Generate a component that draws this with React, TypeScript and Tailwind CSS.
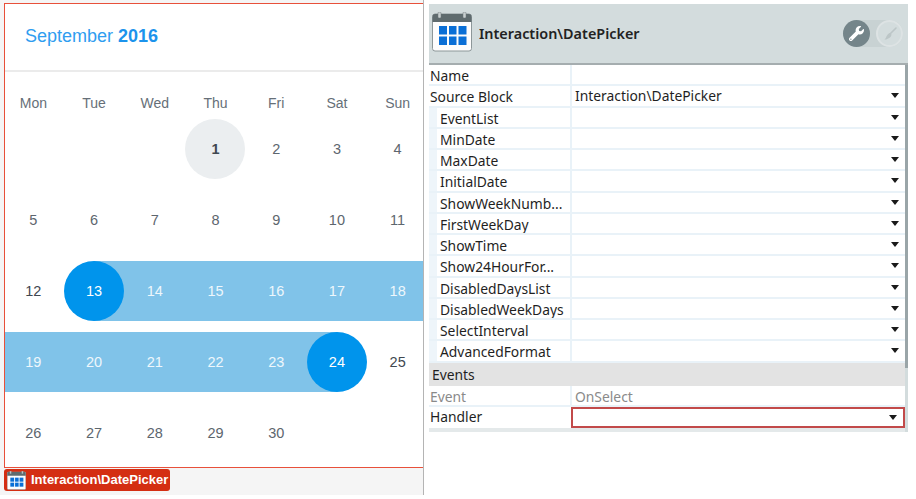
import React from "react";
import { FaWrench } from "react-icons/fa";

const head = ["Mon", "Tue", "Wed", "Thu", "Fri", "Sat", "Sun"];
type D = { n: string; k?: "today" | "start" | "end" | "range" | "plain" };
const weeks: D[][] = [
  [{ n: "" }, { n: "" }, { n: "" }, { n: "1", k: "today" }, { n: "2" }, { n: "3" }, { n: "4" }],
  ["5", "6", "7", "8", "9", "10", "11"].map((n) => ({ n })),
  [{ n: "12", k: "plain" }, { n: "13", k: "start" }, { n: "14", k: "range" }, { n: "15", k: "range" }, { n: "16", k: "range" }, { n: "17", k: "range" }, { n: "18", k: "range" }],
  [{ n: "19", k: "range" }, { n: "20", k: "range" }, { n: "21", k: "range" }, { n: "22", k: "range" }, { n: "23", k: "range" }, { n: "24", k: "end" }, { n: "25", k: "plain" }],
  [{ n: "26" }, { n: "27" }, { n: "28" }, { n: "29" }, { n: "30" }, { n: "" }, { n: "" }],
];

function Day({ d }: { d: D }) {
  if (d.k === "today")
    return (
      <div className="h-[60px] flex items-center justify-center">
        <div className="w-[60px] h-[60px] pt-[2px] rounded-full bg-[#ebeef0] flex items-center justify-center font-bold text-[#3f4850]">{d.n}</div>
      </div>
    );
  if (d.k === "start")
    return (
      <div className="h-[60px] bg-[linear-gradient(to_right,transparent_50%,#80c3e9_50%)] flex items-center justify-center">
        <div className="w-[60px] h-[60px] pt-[2px] rounded-full bg-[#0094ec] flex items-center justify-center text-white">{d.n}</div>
      </div>
    );
  if (d.k === "end")
    return (
      <div className="h-[60px] bg-[linear-gradient(to_left,transparent_50%,#80c3e9_50%)] flex items-center justify-center">
        <div className="w-[60px] h-[60px] pt-[2px] rounded-full bg-[#0094ec] flex items-center justify-center text-white">{d.n}</div>
      </div>
    );
  if (d.k === "range")
    return <div className="h-[60px] pt-[2px] bg-[#80c3e9] flex items-center justify-center text-[#eef7fc]">{d.n}</div>;
  return <div className={`h-[60px] pt-[2px] flex items-center justify-center ${d.k === "plain" ? "text-[#3f4850]" : "text-[#5d666e]"}`}>{d.n}</div>;
}

function CalIcon({ className }: { className: string }) {
  return (
    <svg viewBox="0 0 40 40" className={className}>
      <rect x="0.5" y="2" width="39" height="37" rx="2.5" fill="#fdfdfd" stroke="#8d9799" />
      <path d="M0.5 10V4.5a2.5 2.5 0 0 1 2.5-2.5h34a2.5 2.5 0 0 1 2.5 2.5V10z" fill="#5f6b6e" />
      <rect x="6" y="0" width="3" height="6" rx="1" fill="#c8cfd0" stroke="#6d777b" strokeWidth="0.5" />
      <rect x="31" y="0" width="3" height="6" rx="1" fill="#c8cfd0" stroke="#6d777b" strokeWidth="0.5" />
      <g fill="#0a6fd6">
        <rect x="7" y="14" width="8" height="8.5" />
        <rect x="17" y="14" width="7.5" height="8.5" />
        <rect x="26.5" y="14" width="8" height="8.5" />
        <rect x="7" y="24.5" width="8" height="8.5" />
        <rect x="17" y="24.5" width="7.5" height="8.5" />
        <rect x="26.5" y="24.5" width="8" height="8.5" />
      </g>
    </svg>
  );
}

const props: { label: string; value?: string; indent?: boolean }[] = [
  { label: "Name" },
  { label: "Source Block", value: "Interaction\\DatePicker" },
  { label: "EventList", indent: true, value: "" },
  { label: "MinDate", indent: true, value: "" },
  { label: "MaxDate", indent: true, value: "" },
  { label: "InitialDate", indent: true, value: "" },
  { label: "ShowWeekNumb...", indent: true, value: "" },
  { label: "FirstWeekDay", indent: true, value: "" },
  { label: "ShowTime", indent: true, value: "" },
  { label: "Show24HourFor...", indent: true, value: "" },
  { label: "DisabledDaysList", indent: true, value: "" },
  { label: "DisabledWeekDays", indent: true, value: "" },
  { label: "SelectInterval", indent: true, value: "" },
  { label: "AdvancedFormat", indent: true, value: "" },
];

function Caret() {
  return <span className="w-0 h-0 border-x-[4px] border-x-transparent border-t-[5px] border-t-[#1a1a1a] mr-[6px]" />;
}

function Row({ label, value, indent }: { label: string; value?: string; indent?: boolean }) {
  return (
    <div className="h-[21.25px] flex border-b-2 border-[#e9f2f8] leading-[22px] overflow-hidden">
      {indent && <div className="w-[8px] shrink-0 bg-[#eef5fa]" />}
      <div className={`shrink-0 border-r-2 border-[#e9f2f8] whitespace-nowrap ${indent ? "w-[135px] pl-[3px]" : "w-[143px] pl-px"}`}>{label}</div>
      <div className="flex-1 flex items-center justify-between pl-[3px]">
        <span>{value}</span>
        {value !== undefined && <Caret />}
      </div>
    </div>
  );
}

export default function App() {
  return (
    <div className="w-[916px] h-[499px] bg-white flex overflow-hidden font-['Liberation_Sans',sans-serif]">
      <div className="w-[424px] h-[495px] shrink-0 bg-[#f5f5f5] border-r border-[#b4b4b4] flex flex-col">
        <div className="mt-[3px] ml-[4px] h-[465px] bg-white border border-r-0 border-[#e8503a] overflow-hidden shrink-0">
          <div className="h-[68px] pb-[2px] border-b-2 border-[#ebebeb] pl-[20px] flex items-center text-[18px] text-[#2f9df0]">
            September&nbsp;<b className="text-[#1c93ec]">2016</b>
          </div>
          <div className="ml-[-2px] w-[425px] text-[14.5px]">
            <div className="grid grid-cols-7 h-[47px] items-center pt-[15px] text-[#666f78] text-center text-[14px]">
              {head.map((h) => (
                <div key={h}>{h}</div>
              ))}
            </div>
            <div className="flex flex-col gap-[11px]">
              {weeks.map((w, i) => (
                <div key={i} className="grid grid-cols-7">
                  {w.map((d, j) => (
                    <Day key={j} d={d} />
                  ))}
                </div>
              ))}
            </div>
          </div>
        </div>
        <div className="ml-[4px] mt-[1px] w-[166px] h-[22px] rounded-[3px] bg-[#d42e12] flex items-center text-white text-[13px] font-bold">
          <CalIcon className="w-[19px] h-[19px] mr-[5px] ml-[3px]" />
          <span>Interaction\DatePicker</span>
        </div>
      </div>
      <div className="w-[479px] ml-[5px] mt-[4px] h-[428px] flex flex-col bg-[#d3dcdd] font-['Noto_Sans',sans-serif] text-[13.85px] text-[#1f1f1f]">
        <div className="h-[61px] shrink-0 border-b-2 border-[#a5adaf] flex items-center pl-[3px] pr-[5px]">
          <CalIcon className="w-[40px] h-[40px] mr-[7px] mb-[3px]" />
          <span className="font-semibold text-[14.4px] text-[#222]">Interaction\DatePicker</span>
          <div className="ml-auto w-[60px] h-[27px] rounded-full bg-[#c8d2d3] flex items-center justify-between">
            <div className="w-[27px] h-[27px] rounded-full bg-[#74858a] flex items-center justify-center">
              <FaWrench className="text-white w-[15px] h-[15px]" />
            </div>
            <div className="w-[27px] h-[27px] rounded-full border-2 border-[#dde3e4] bg-[#d3dcdd] flex items-center justify-center">
              <svg viewBox="0 0 16 16" className="w-[16px] h-[16px]">
                <path d="M14 2 8 8" stroke="#bcc6c7" strokeWidth="1.6" strokeLinecap="round" />
                <path d="M8.8 7.2c1 1 .8 2.6-.3 3.7C7 12.4 4.6 13.4 2.4 13.6c1.4-1.2 1.7-2.8 2.6-4.2 1-1.5 2.7-3.2 3.8-2.2z" fill="#bcc6c7" />
              </svg>
            </div>
          </div>
        </div>
        <div className="flex flex-1 min-h-0">
          <div className="flex-1 min-w-0 flex flex-col">
            <div className="bg-white">
              {props.map((p) => (
                <Row key={p.label} {...p} />
              ))}
              <div className="h-[23px] bg-[#e3e3e3] pl-[3px] leading-[23px]">Events</div>
              <div className="h-[21px] flex border-b-2 border-[#e9f2f8] text-[#8a8a8a] leading-[21px]">
                <div className="w-[143px] pl-px border-r-2 border-[#e9f2f8]">Event</div>
                <div className="pl-[3px]">OnSelect</div>
              </div>
              <div className="h-[21px] flex leading-[20px]">
                <div className="w-[142px] pl-px">Handler</div>
                <div className="flex-1 border-2 border-[#c24a4a] flex items-center justify-end">
                  <Caret />
                </div>
              </div>
            </div>
            <div className="flex-1 bg-[#e4e9ea]" />
          </div>
          <div className="w-[3px] shrink-0">
            <div className="h-[303px] bg-[#9aa5a8]" />
          </div>
        </div>
      </div>
    </div>
  );
}
